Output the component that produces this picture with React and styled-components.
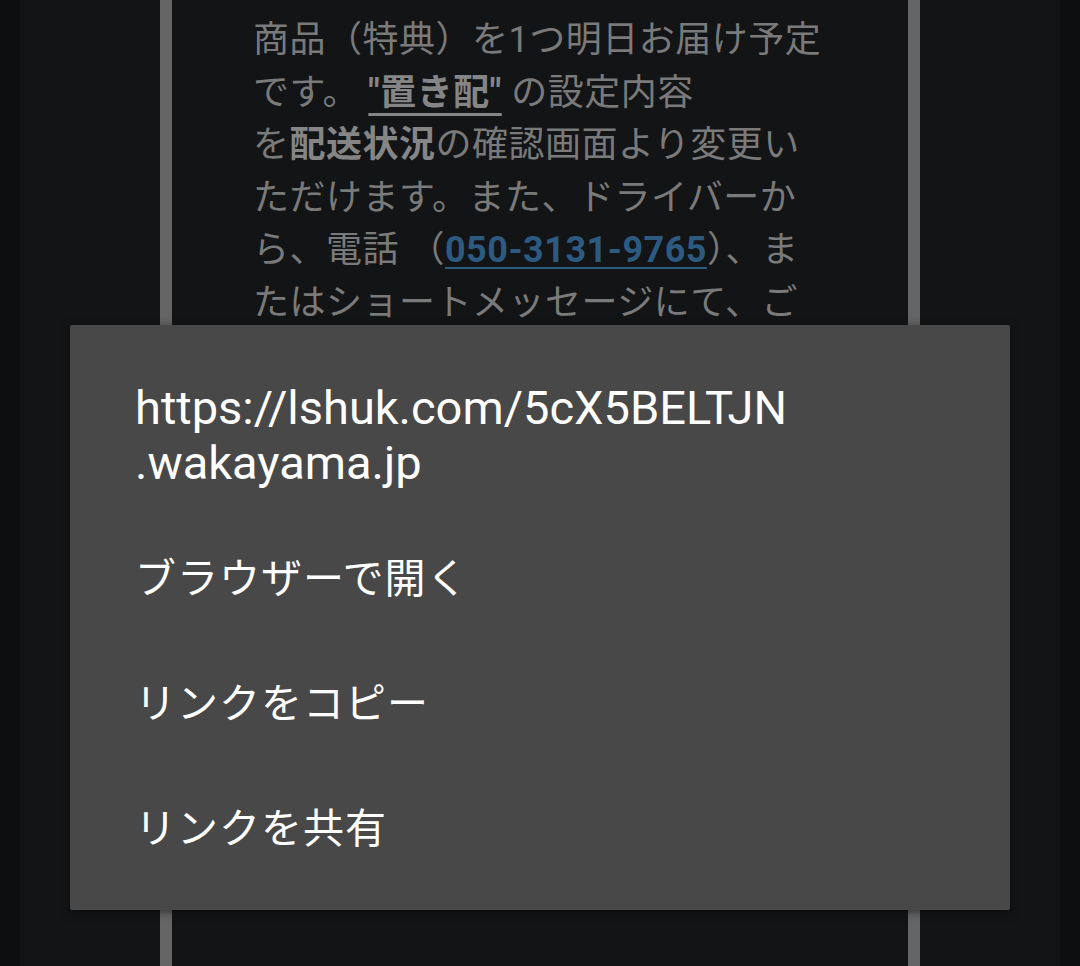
import React from 'react';
import styled, { createGlobalStyle } from 'styled-components';

const GlobalStyle = createGlobalStyle`
  html, body {
    margin: 0;
    padding: 0;
    background: #0c0d0f;
    overflow: hidden;
  }
  #root {
    height: 966px;
  }
`;

const Screen = styled.div`
  position: relative;
  display: flex;
  width: 1080px;
  height: 966px;
  background: #0c0d0f;
  font-family: Roboto, "Noto Sans CJK JP", sans-serif;
  overflow: hidden;
`;

const Edge = styled.div`
  width: 20px;
  flex: none;
  background: #0d0e10;
`;

const Side = styled.div`
  width: 140px;
  flex: none;
  background: #131416;
`;

const Divider = styled.div`
  width: 12px;
  flex: none;
  background: #656565;
`;

const Main = styled.div`
  flex: 1;
  background: #131416;
  padding: 14px 0 0 81px;
`;

const Message = styled.p`
  margin: 0;
  font-family: Roboto, "Noto Sans CJK JP", sans-serif;
  font-size: 36px;
  line-height: 52.5px;
  letter-spacing: 0.5px;
  color: #7a7a7a;
  white-space: nowrap;
`;

const Strong = styled.b`
  font-weight: 700;
  color: #858585;
`;

const Underlined = styled(Strong)`
  text-decoration: underline;
  text-decoration-thickness: 3px;
  text-underline-offset: 8px;
`;

const Phone = styled.b`
  font-weight: 700;
  color: #2c5a80;
  text-decoration: underline;
  text-decoration-thickness: 2px;
  text-underline-offset: 5px;
`;

const Dialog = styled.div`
  position: absolute;
  left: 70px;
  top: 325px;
  width: 940px;
  height: 585px;
  box-sizing: border-box;
  padding: 55px 65px 22px;
  background: #484848;
  border-radius: 2px;
  box-shadow: 0 2px 10px rgba(0, 0, 0, 0.5);
  display: flex;
  flex-direction: column;
`;

const Url = styled.div`
  font-family: Roboto, "Noto Sans CJK JP", sans-serif;
  font-size: 47px;
  line-height: 55px;
  color: #ffffff;
  margin-bottom: 22px;
`;

const MenuItem = styled.div`
  height: 125px;
  display: flex;
  align-items: center;
  font-family: "Noto Sans CJK JP", sans-serif;
  font-size: 41px;
  letter-spacing: 1px;
  color: #ffffff;
`;

const items = ['ブラウザーで開く', 'リンクをコピー', 'リンクを共有'];

export default function App() {
  return (
    <>
      <GlobalStyle />
      <Screen>
        <Edge />
        <Side />
        <Divider />
        <Main>
          <Message>
            商品（特典）を1つ明日お届け予定
            <br />
            です。 <Underlined>"置き配"</Underlined> の設定内容
            <br />
            を<Strong>配送状況</Strong>の確認画面より変更い
            <br />
            ただけます。また、ドライバーか
            <br />
            ら、電話 （<Phone>050-3131-9765</Phone>）、ま
            <br />
            たはショートメッセージにて、ご
            <br />
            連絡させていただく場合がござい
          </Message>
        </Main>
        <Divider />
        <Side />
        <Edge />
        <Dialog>
          <Url>
            https://lshuk.com/5cX5BELTJN
            <br />
            .wakayama.jp
          </Url>
          {items.map((label) => (
            <MenuItem key={label}>{label}</MenuItem>
          ))}
        </Dialog>
      </Screen>
    </>
  );
}
